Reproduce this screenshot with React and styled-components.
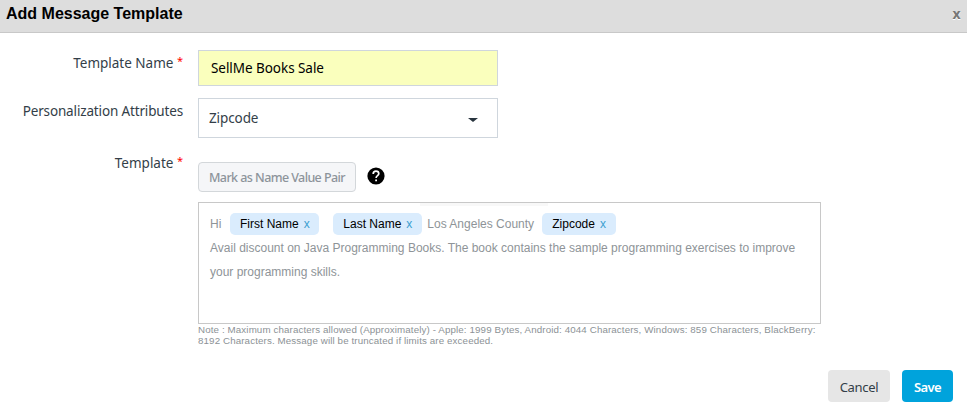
import React from "react";
import styled, { createGlobalStyle } from "styled-components";

const Global = createGlobalStyle`
  * { box-sizing: border-box; }
  body { margin: 0; background: #fff; }
`;

const Dialog = styled.div`
  width: 967px;
  height: 412px;
  background: #fff;
  font-family: "Noto Sans", sans-serif;
  font-size: 13.5px;
  color: #333e48;
  overflow: hidden;
`;

const Header = styled.header`
  height: 33px;
  display: flex;
  justify-content: space-between;
  padding: 0 5px 0 6px;
  background: #ddd;
  border-bottom: 1px solid #c8c8c8;
`;

const Title = styled.h1`
  margin: 0;
  font: bold 16px/27px "Liberation Sans", Arial, sans-serif;
  color: #000;
  white-space: nowrap;
`;

const Close = styled.button`
  border: 0;
  padding: 0;
  background: none;
  font: bold 14px/26px "Noto Sans", sans-serif;
  height: 27px;
  width: 11px;
  color: #777;
  text-shadow: 0 1px 0 #fff;
`;

const Form = styled.div`
  display: grid;
  grid-template-columns: 183px 623px;
  column-gap: 15px;
  grid-template-rows: 48px 64px 184px;
  padding-top: 17px;
`;

const Label = styled.label`
  text-align: right;
  line-height: 20px;
  margin-top: ${(p) => p.$top}px;
  white-space: nowrap;
  letter-spacing: ${(p) => p.$spacing}px;
`;

const Required = styled.span`
  color: #f00;
  font-size: 11px;
  line-height: 1;
  letter-spacing: 0;
  vertical-align: 3px;
`;

const Input = styled.input`
  width: 300px;
  height: 36px;
  padding: 0 12px;
  border: 1px solid #cfd6dd;
  border-radius: 0;
  background: #faffbd;
  color: #000;
  font: 13.5px "Noto Sans", sans-serif;
  letter-spacing: -0.05px;
  outline: 0;
`;

const Select = styled.div`
  width: 300px;
  height: 40px;
  display: flex;
  justify-content: space-between;
  align-items: center;
  padding: 0 19px 0 10px;
  border: 1px solid #cfd6dd;
  letter-spacing: -0.1px;
`;

const Caret = styled.span`
  border: 5px solid transparent;
  border-top: 4px solid #28343e;
  border-bottom: 0;
  margin-top: 4px;
`;

const Tools = styled.div`
  display: flex;
  align-items: center;
  height: 30px;
  gap: 11px;
`;

const MarkButton = styled.button`
  width: 158px;
  height: 30px;
  padding: 0;
  border: 1px solid #d3d7da;
  border-radius: 4px;
  background: #f5f6f8;
  color: #8d949b;
  font: 500 12.5px "Noto Sans", sans-serif;
  letter-spacing: -0.62px;
  word-spacing: 0.2px;
  white-space: nowrap;
`;

const HelpIcon = styled.svg`
  width: 18px;
  height: 18px;
  margin-top: -3px;
`;

const Editor = styled.div`
  height: 122px;
  margin-top: 10px;
  padding: 9px 11px;
  border: 1px solid #c8c8c8;
  background: linear-gradient(#f8f8f8, #f8f8f8) 221px 0 / 128px 3px no-repeat;
  color: #8e9498;
  font: 12px/24px "Liberation Sans", Arial, sans-serif;
`;

const TokenLine = styled.div`
  display: flex;
  align-items: center;
  height: 24px;
`;

const Token = styled.span`
  height: 22px;
  width: ${(p) => p.$width}px;
  margin-left: ${(p) => p.$gap}px;
  display: flex;
  align-items: center;
  justify-content: center;
  gap: 5px;
  border-radius: 5px;
  background: #daecfd;
  color: #000;
  white-space: nowrap;
`;

const Remove = styled.span`
  color: #3c9fd0;
`;

const County = styled.span`
  margin-left: 5px;
`;

const TextLine = styled.div`
  white-space: nowrap;
`;

const Note = styled.div`
  color: #8c9296;
  font: 9.75px/11px "Liberation Sans", Arial, sans-serif;
  letter-spacing: 0.12px;
`;

const Footer = styled.footer`
  display: flex;
  justify-content: flex-end;
  gap: 12px;
  padding: 24px 14px 0 0;
`;

const Action = styled.button`
  width: ${(p) => (p.$primary ? 51 : 62)}px;
  height: 32px;
  padding: 2px 0 0;
  border: 0;
  border-radius: 4px;
  background: ${(p) => (p.$primary ? "#00a3dc" : "#e6e6e6")};
  color: ${(p) => (p.$primary ? "#fff" : "#333e48")};
  font: ${(p) => (p.$primary ? 600 : 400)} 13px "Noto Sans", sans-serif;
  letter-spacing: ${(p) => (p.$primary ? -0.6 : -0.3)}px;
`;

export default function App() {
  return (
    <Dialog>
      <Global />
      <Header>
        <Title>Add Message Template</Title>
        <Close>x</Close>
      </Header>
      <Form>
        <Label $top={3} $spacing={0}>Template Name <Required>*</Required></Label>
        <Input defaultValue="SellMe Books Sale" />
        <Label $top={3} $spacing={-0.15}>Personalization Attributes</Label>
        <Select>Zipcode<Caret /></Select>
        <Label $top={-9} $spacing={0}>Template <Required>*</Required></Label>
        <div>
          <Tools>
            <MarkButton>Mark as Name Value Pair</MarkButton>
            <HelpIcon viewBox="0 0 18 18">
              <circle cx="9" cy="9" r="8.6" fill="#000" />
              <path d="M6.2 7.1C6.2 5.2 7.3 4.2 9 4.2s2.8 1 2.8 2.5c0 1.9-2.7 2-2.7 4.2" fill="none" stroke="#fff" strokeWidth="1.7" />
              <path d="M8.2 12.4h1.8v1.8H8.2z" fill="#fff" />
            </HelpIcon>
          </Tools>
          <Editor>
            <TokenLine>
              Hi
              <Token $width={89} $gap={9}>First Name<Remove>x</Remove></Token>
              <Token $width={89} $gap={14}>Last Name<Remove>x</Remove></Token>
              <County>Los Angeles County</County>
              <Token $width={74} $gap={8}>Zipcode<Remove>x</Remove></Token>
            </TokenLine>
            <TextLine>Avail discount on Java Programming Books. The book contains the sample programming exercises to improve</TextLine>
            <TextLine>your programming skills.</TextLine>
          </Editor>
          <Note>
            <TextLine>Note : Maximum characters allowed (Approximately) - Apple: 1999 Bytes, Android: 4044 Characters, Windows: 859 Characters, BlackBerry:</TextLine>
            <TextLine>8192 Characters. Message will be truncated if limits are exceeded.</TextLine>
          </Note>
        </div>
      </Form>
      <Footer>
        <Action>Cancel</Action>
        <Action $primary>Save</Action>
      </Footer>
    </Dialog>
  );
}
